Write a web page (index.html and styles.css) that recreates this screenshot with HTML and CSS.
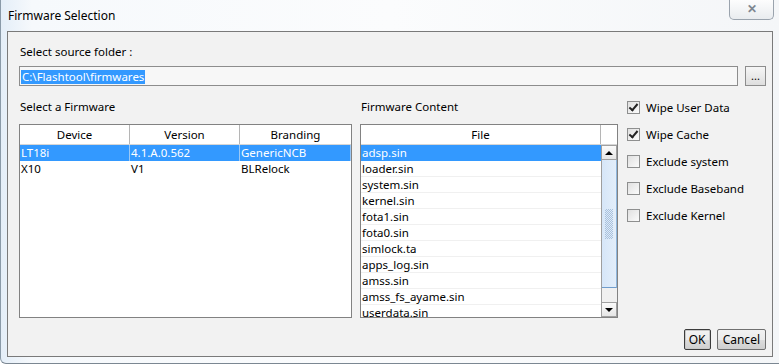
FILE: index.html
```html
<!DOCTYPE html>
<html lang="en">
	<head>
		<meta charset="UTF-8" />
		<title>Firmware Selection</title>
		<link rel="stylesheet" href="styles.css">
	</head>
	<body>
		<div class="window">
			<div class="titlebar">
				<span class="title">Firmware Selection</span>
				<span class="close-btn">&#x2715;</span>
			</div>

			<div class="client">
				<div class="label">Select source folder :</div>
				<div class="folder-row">
					<div class="folder-field"><span class="sel">C:\Flashtool\firmwares</span></div>
					<button class="browse-btn">...</button>
				</div>

				<div class="main">
					<div class="col">
						<div class="label">Select a Firmware</div>
						<div class="table">
							<div class="thead three">
								<div>Device</div>
								<div>Version</div>
								<div>Branding</div>
							</div>
							<div class="trow three selected">
								<div>LT18i</div>
								<div>4.1.A.0.562</div>
								<div>GenericNCB</div>
							</div>
							<div class="trow three">
								<div>X10</div>
								<div>V1</div>
								<div>BLRelock</div>
							</div>
						</div>
					</div>

					<div class="col">
						<div class="label">Firmware Content</div>
						<div class="table files">
							<div class="thead one">
								<div>File</div>
								<div class="corner"></div>
							</div>
							<div class="files-body">
								<div class="file-list">
									<div class="frow selected">adsp.sin</div>
									<div class="frow">loader.sin</div>
									<div class="frow">system.sin</div>
									<div class="frow">kernel.sin</div>
									<div class="frow">fota1.sin</div>
									<div class="frow">fota0.sin</div>
									<div class="frow">simlock.ta</div>
									<div class="frow">apps_log.sin</div>
									<div class="frow">amss.sin</div>
									<div class="frow">amss_fs_ayame.sin</div>
									<div class="frow">userdata.sin</div>
								</div>
								<div class="scrollbar">
									<div class="sb-btn"><span class="arrow up"></span></div>
									<div class="sb-thumb"><span class="grip"></span></div>
									<div class="sb-track"></div>
									<div class="sb-btn"><span class="arrow down"></span></div>
								</div>
							</div>
						</div>
					</div>

					<div class="options">
						<label class="opt"><span class="box checked"></span>Wipe User Data</label>
						<label class="opt"><span class="box checked"></span>Wipe Cache</label>
						<label class="opt"><span class="box"></span>Exclude system</label>
						<label class="opt"><span class="box"></span>Exclude Baseband</label>
						<label class="opt"><span class="box"></span>Exclude Kernel</label>
					</div>
				</div>

				<div class="actions">
					<button class="btn default">OK</button>
					<button class="btn">Cancel</button>
				</div>
			</div>
		</div>
	</body>
</html>
```

FILE: styles.css
```css
html, body {
	margin: 0;
	padding: 0;
}

body {
	font-family: "Noto Sans", "Open Sans", sans-serif;
	font-size: 11.5px;
	color: #000;
	background: #fff;
}

.window {
	width: 779px;
	height: 364px;
	box-sizing: border-box;
	background: linear-gradient(to right, #e4eef8 0%, #f6f9fc 4%, #fbfcfd 50%, #f4f6f8 100%);
	border-left: 1px solid #8a9aa8;
	border-bottom: 1px solid #7b8792;
	border-radius: 0 0 0 6px;
	display: flex;
	flex-direction: column;
}

.titlebar {
	height: 31px;
	display: flex;
	justify-content: space-between;
	align-items: flex-start;
}

.title {
	font-size: 12px;
	margin: 7px 0 0 7px;
	color: #000;
}

.close-btn {
	width: 43px;
	height: 19px;
	margin-right: 5px;
	border: 1px solid #9aa3ad;
	border-top: none;
	border-radius: 0 0 5px 5px;
	background: linear-gradient(#fdfdfd, #e9ecef);
	color: #7e8790;
	font-size: 12px;
	font-weight: bold;
	text-align: center;
	line-height: 18px;
}

.client {
	flex: 1;
	margin: 0 6px 6px 6px;
	border: 1px solid #7a7a7a;
	background: #f2f2f2;
	padding: 12px 6px 0 11px;
	display: flex;
	flex-direction: column;
}

.label {
	height: 16px;
	line-height: 16px;
	padding-left: 1px;
}

.folder-row {
	display: flex;
	gap: 7px;
	margin-top: 6px;
	height: 20px;
}

.folder-field {
	flex: 1;
	border: 1px solid #8d8d8d;
	background: #f7f7f7;
	padding: 2px 1px;
	box-sizing: border-box;
}

.sel {
	display: inline-block;
	background: #3399ff;
	color: #fff;
	height: 14px;
	line-height: 14px;
	padding: 0 1px;
}

.browse-btn {
	width: 21px;
	height: 20px;
	border: 1px solid #8d8d8d;
	background: linear-gradient(#f6f6f6, #dedede);
	font-family: inherit;
	font-size: 11px;
	padding: 0;
	line-height: 14px;
}

.main {
	display: grid;
	grid-template-columns: 333px 258px 1fr;
	column-gap: 8px;
	margin-top: 13px;
}

.col .label {
	margin-bottom: 9px;
}

.table {
	height: 194px;
	border: 1px solid #828282;
	background: #fff;
	box-sizing: border-box;
	overflow: hidden;
}

.thead {
	display: grid;
	height: 20px;
	border-bottom: 1px solid #d6d6d6;
	box-sizing: border-box;
}

.thead > div {
	text-align: center;
	line-height: 19px;
	border-right: 1px solid #b5b5b5;
}

.thead > div:last-child {
	border-right: none;
}

.three {
	grid-template-columns: 110px 110px 1fr;
}

.one {
	grid-template-columns: 1fr 16px;
}

.thead .corner {
	background: #fff;
}

.trow {
	display: grid;
	height: 16px;
	line-height: 16px;
}

.trow > div {
	padding-left: 1px;
	white-space: nowrap;
}

.selected {
	background: #3399ff;
	color: #fff;
}

.trow.selected > div {
	border-right: 1px solid #9cc8f5;
}

.files-body {
	display: flex;
	height: 172px;
}

.file-list {
	flex: 1;
}

.frow {
	height: 16px;
	line-height: 16px;
	padding-left: 1px;
	border-bottom: 1px solid #f0f0f0;
	box-sizing: border-box;
	white-space: nowrap;
}

.frow.selected {
	border-bottom-color: #3399ff;
}

.scrollbar {
	width: 16px;
	display: flex;
	flex-direction: column;
	border-left: 1px solid #9e9e9e;
	box-sizing: border-box;
}

.sb-btn {
	height: 15px;
	background: linear-gradient(#fbfbfb, #e6e6e6);
	border: 1px solid #a0a0a0;
	border-left: none;
	box-sizing: border-box;
	display: flex;
	align-items: center;
	justify-content: center;
}

.arrow {
	width: 0;
	height: 0;
	border-left: 4px solid transparent;
	border-right: 4px solid transparent;
}

.arrow.up {
	border-bottom: 4px solid #000;
}

.arrow.down {
	border-top: 4px solid #000;
}

.sb-thumb {
	height: 128px;
	background: linear-gradient(to right, #d6e6f8, #e3eefa);
	border-right: 1px solid #8fb6dd;
	border-bottom: 1px solid #6f9ccc;
	box-sizing: border-box;
	display: flex;
	align-items: center;
	justify-content: center;
}

.grip {
	width: 8px;
	height: 30px;
	background: repeating-conic-gradient(#a9c1dc 0 25%, transparent 0 50%) 0 0 / 2px 2px;
}

.sb-track {
	flex: 1;
	background: #f0f0f0;
}

.options {
	display: flex;
	flex-direction: column;
	gap: 11px;
	padding-left: 1px;
}

.opt {
	display: flex;
	align-items: center;
	gap: 6px;
	height: 16px;
}

.box {
	width: 13px;
	height: 13px;
	box-sizing: border-box;
	border: 1px solid #8e8f8f;
	background: linear-gradient(135deg, #e0e0e0, #fbfbfb);
	position: relative;
}

.box.checked::after {
	content: "";
	position: absolute;
	left: 3px;
	top: 0px;
	width: 3px;
	height: 7px;
	border-right: 2px solid #222;
	border-bottom: 2px solid #222;
	transform: rotate(40deg);
}

.actions {
	display: flex;
	justify-content: flex-end;
	gap: 6px;
	margin-top: 11px;
}

.btn {
	height: 21px;
	border: 1px solid #707070;
	border-radius: 2px;
	background: linear-gradient(#f2f2f2 0%, #ebebeb 50%, #dddddd 51%, #cfcfcf 100%);
	font-family: inherit;
	font-size: 12px;
	padding: 0 5px;
	line-height: 18px;
}

.btn.default {
	border-color: #3c3c3c;
	box-shadow: inset 0 0 0 1px #c9c9c9;
	width: 27px;
	padding: 0;
}
```
